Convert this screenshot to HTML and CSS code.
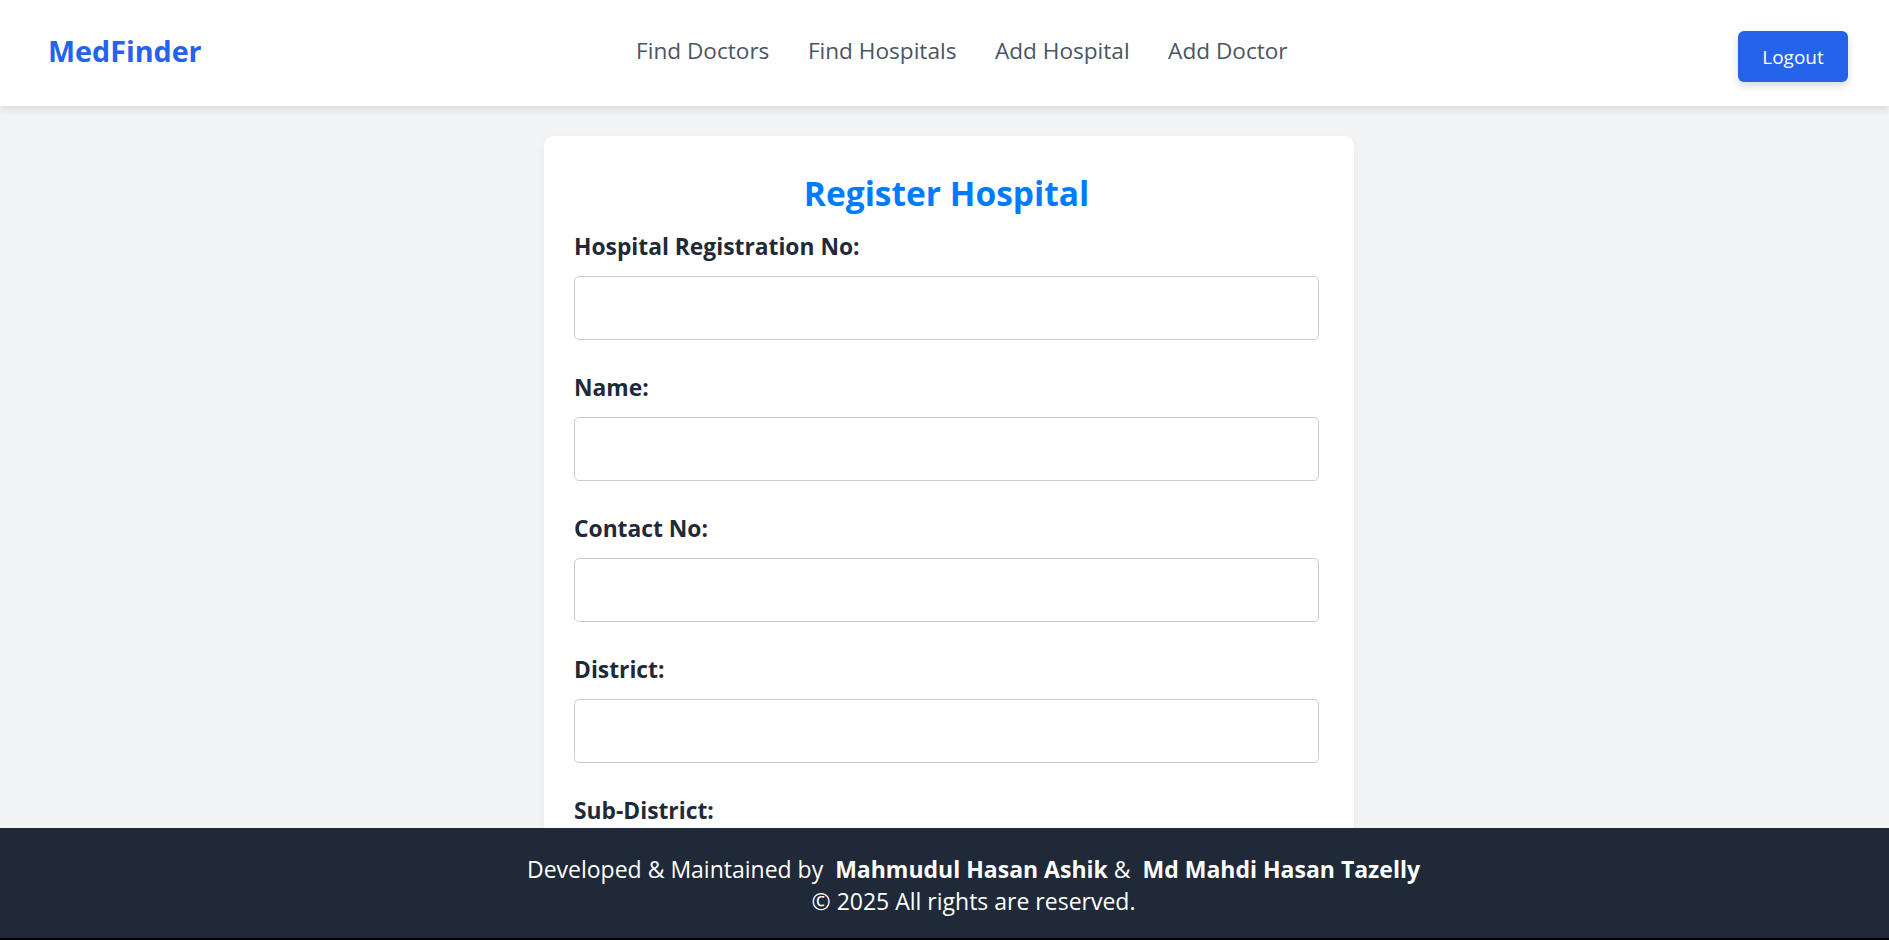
FILE: index.html
```html
<!DOCTYPE html>
<html lang="en">
<head>
<meta charset="utf-8">
<title>MedFinder - Register Hospital</title>
<link rel="stylesheet" href="styles.css">
</head>
<body>
<header class="topbar">
  <a class="logo" href="#">MedFinder</a>
  <nav class="nav">
    <a href="#">Find Doctors</a>
    <a href="#">Find Hospitals</a>
    <a href="#">Add Hospital</a>
    <a href="#">Add Doctor</a>
  </nav>
  <button class="logout">Logout</button>
</header>
<main class="main">
  <form class="card">
    <h1 class="title">Register Hospital</h1>
    <div class="field">
      <label>Hospital Registration No:</label>
      <input type="text">
    </div>
    <div class="field">
      <label>Name:</label>
      <input type="text">
    </div>
    <div class="field">
      <label>Contact No:</label>
      <input type="text">
    </div>
    <div class="field">
      <label>District:</label>
      <input type="text">
    </div>
    <div class="field">
      <label>Sub-District:</label>
      <input type="text">
    </div>
  </form>
</main>
<footer class="footer">
  <p>Developed &amp; Maintained by &nbsp;<b>Mahmudul Hasan Ashik</b> &amp; &nbsp;<b>Md Mahdi Hasan Tazelly</b></p>
  <p>© 2025 All rights are reserved.</p>
</footer>
</body>
</html>
```
FILE: styles.css
```css
* { box-sizing: border-box; }
body {
  margin: 0;
  background: #f3f4f6;
  font-family: "Open Sans", "Noto Sans", sans-serif;
  color: #1f2937;
}
.topbar {
  height: 106px;
  background: #fff;
  box-shadow: 0 4px 8px rgba(0,0,0,0.1);
  display: flex;
  align-items: center;
  justify-content: space-between;
  padding: 0 41px 0 48px;
  position: relative;
  z-index: 2;
}
.logo {
  color: #2563eb;
  font-weight: 700;
  font-size: 28.7px;
  text-decoration: none;
  margin-top: -6px;
}
.nav {
  display: flex;
  gap: 38.5px;
  margin-top: -6px;
  margin-left: -16px;
}
.nav a {
  color: #4b5563;
  text-decoration: none;
  font-size: 22.6px;
}
.logout {
  width: 110px;
  height: 51px;
  background: #2563eb;
  color: #fff;
  border: 0;
  border-radius: 6px;
  font-family: inherit;
  font-size: 19px;
  padding-top: 3px;
  box-shadow: 0 4px 8px rgba(0,0,0,0.15);
  margin-top: 6px;
}
.main {
  padding: 30px 0 40px 9px;
}
.card {
  width: 810px;
  margin: 0 auto;
  background: #fff;
  border-radius: 10px;
  box-shadow: 0 4px 10px rgba(0,0,0,0.06);
  padding: 35px 35px 30px 30px;
}
.title {
  margin: 0 0 17px;
  text-align: center;
  color: #007bff;
  font-size: 33.5px;
  font-weight: 700;
  line-height: 44px;
}
.field {
  margin-bottom: 33px;
}
.field label {
  display: block;
  font-weight: 700;
  font-size: 22.8px;
  line-height: 30px;
  margin-bottom: 14px;
}
.field input {
  display: block;
  width: 100%;
  height: 64px;
  border: 1px solid #cccccc;
  border-radius: 5px;
  background: #fff;
  font-size: 20px;
  padding: 0 12px;
}
.footer {
  position: fixed;
  left: 0;
  right: 0;
  bottom: 0;
  height: 112px;
  background: #1f2937;
  border-bottom: 2px solid #000;
  color: #fff;
  text-align: center;
  font-size: 23px;
  line-height: 32px;
  padding: 25px 0 0 58px;
  z-index: 3;
}
.footer p { margin: 0; }
.footer b { font-weight: 700; }
```
